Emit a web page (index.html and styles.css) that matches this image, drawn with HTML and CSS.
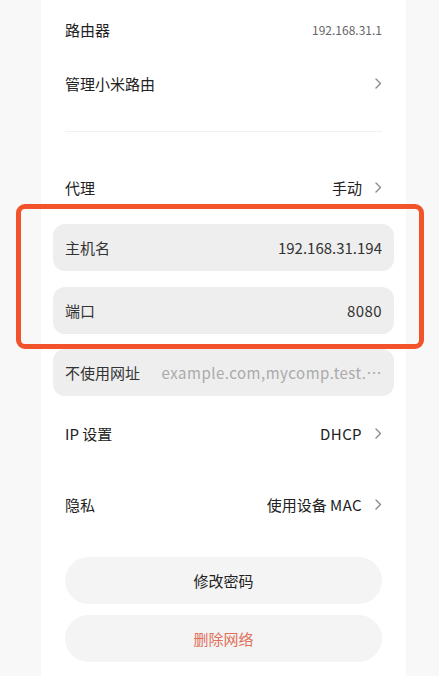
FILE: index.html
```html
<!DOCTYPE html>
<html lang="zh-CN">
<head>
<meta charset="utf-8">
<link rel="stylesheet" href="styles.css">
</head>
<body>
<div class="panel">
  <div class="row"><span class="label">路由器</span><span class="value small">192.168.31.1</span></div>
  <div class="row"><span class="label">管理小米路由</span><span class="value"><svg class="chev" viewBox="0 0 7 11"><path d="M1 1l4.5 4.5L1 10"/></svg></span></div>
  <div class="divider"></div>
  <div class="row r-proxy"><span class="label">代理</span><span class="value">手动<svg class="chev" viewBox="0 0 7 11"><path d="M1 1l4.5 4.5L1 10"/></svg></span></div>
  <div class="fields">
    <div class="field"><span class="flabel">主机名</span><span class="fvalue">192.168.31.194</span></div>
    <div class="field f2"><span class="flabel">端口</span><span class="fvalue latin">8080</span></div>
    <div class="field f3"><span class="flabel">不使用网址</span><span class="fvalue hint">example.com,mycomp.test.…</span></div>
    <div class="highlight"></div>
  </div>
  <div class="row r-ip"><span class="label">IP 设置</span><span class="value"><span class="latin">DHCP</span><svg class="chev" viewBox="0 0 7 11"><path d="M1 1l4.5 4.5L1 10"/></svg></span></div>
  <div class="row r-priv"><span class="label">隐私</span><span class="value">使用设备 <span class="latin">MAC</span><svg class="chev" viewBox="0 0 7 11"><path d="M1 1l4.5 4.5L1 10"/></svg></span></div>
  <div class="btn b1">修改密码</div>
  <div class="btn b2 danger">删除网络</div>
</div>
</body>
</html>
```
FILE: styles.css
```css
* { box-sizing: border-box; }
html, body { margin: 0; padding: 0; }
body {
  background: #f8f8f8;
  font-family: "Noto Sans CJK SC", "Noto Sans", sans-serif;
  color: #222;
  height: 676px;
  overflow: hidden;
}
.panel {
  margin-left: 41px;
  width: 365px;
  height: 676px;
  background: #fff;
  padding: 2px 24px 0;
}
.row {
  height: 54px;
  display: flex;
  align-items: center;
  justify-content: space-between;
  font-size: 15px;
}
.label { color: #222; }
.value {
  display: flex;
  align-items: center;
  color: #222;
  font-size: 15px;
  white-space: pre;
}
.value.small { font-size: 12px; color: #666; }
.latin { letter-spacing: 0.4px; }
.chev {
  width: 7px;
  height: 11px;
  margin-left: 13px;
  fill: none;
  stroke: #8a8a8a;
  stroke-width: 1.4;
  stroke-linecap: round;
  stroke-linejoin: round;
}
.divider {
  margin-top: 21px;
  height: 1px;
  background: #f0f0f0;
}
.r-proxy { margin-top: 28px; }
.fields {
  position: relative;
  margin: 10px -12px 0;
}
.field {
  height: 47px;
  border-radius: 12px;
  background: #eeeeee;
  display: flex;
  align-items: center;
  justify-content: space-between;
  padding: 0 12px;
  font-size: 15px;
}
.f2 { margin-top: 16px; }
.f3 { margin-top: 15px; }
.flabel { color: #333; flex: none; }
.fvalue { color: #333; white-space: nowrap; overflow: hidden; margin-left: 18px; }
.fvalue.hint { color: #aaa; letter-spacing: 0.5px; }
.highlight {
  position: absolute;
  left: -37px;
  top: -20px;
  width: 408px;
  height: 145px;
  border: 5px solid #f2532a;
  border-radius: 9px;
  pointer-events: none;
}
.r-ip { margin-top: 10px; }
.r-priv { margin-top: 17px; }
.btn {
  height: 47px;
  border-radius: 24px;
  background: #f4f4f4;
  display: flex;
  align-items: center;
  justify-content: center;
  font-size: 15px;
  color: #222;
}
.b1 { margin-top: 26px; }
.b2 { margin-top: 11px; }
.danger { color: #e0705a; }
```
